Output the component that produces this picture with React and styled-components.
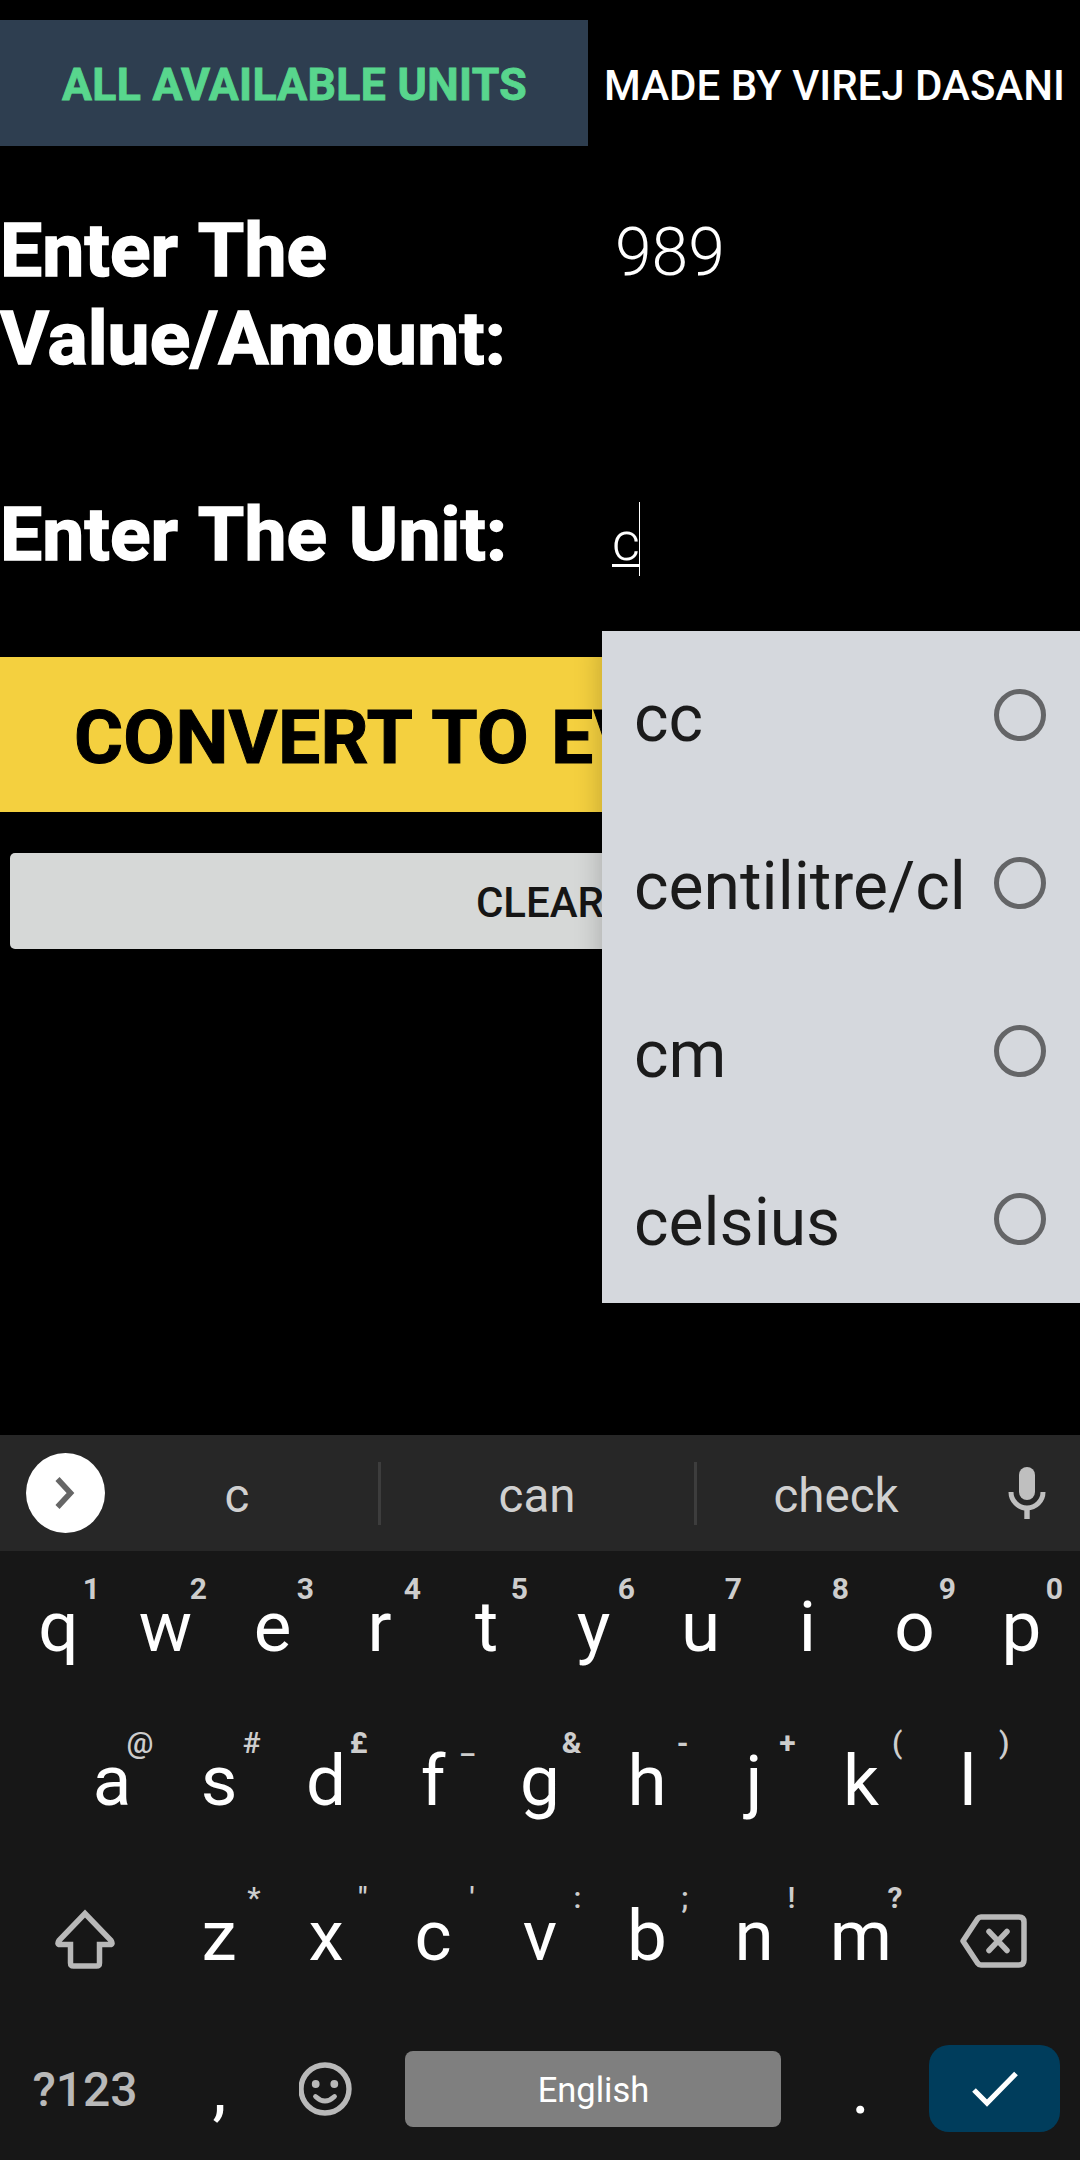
import React from "react";
import styled, { createGlobalStyle } from "styled-components";

const Global = createGlobalStyle`
  * { box-sizing: border-box; }
  html, body { margin: 0; padding: 0; background: #000; }
  body { font-family: Roboto, "Liberation Sans", sans-serif; overflow: hidden; }
  button { font: inherit; border: 0; padding: 0; margin: 0; background: none; color: inherit; }
`;

const Screen = styled.div`
  position: relative;
  width: 1080px;
  height: 2160px;
  overflow: hidden;
  display: flex;
  flex-direction: column;
  background: #000;
  color: #fff;
`;

const Converter = styled.main`
  height: 1435px;
  padding-top: 20px;
  display: flex;
  flex-direction: column;
`;

const Header = styled.header`
  display: grid;
  grid-template-columns: 588px 1fr;
  height: 126px;
  flex: none;
`;

const UnitsButton = styled.button`
  display: flex;
  align-items: center;
  justify-content: center;
  padding: 3px 0 0 1px;
  background: #2e3e50;
  color: #58d68d;
  font-size: 44.5px;
  font-weight: 700;
  letter-spacing: 0.35px;
  -webkit-text-stroke: 0.9px #58d68d;
  white-space: nowrap;
`;

const Credit = styled.div`
  display: flex;
  align-items: center;
  justify-content: center;
  padding: 5px 0 0 1px;
  font-size: 42px;
  font-weight: 500;
  white-space: nowrap;
`;

const Field = styled.div`
  display: grid;
  grid-template-columns: 612px 1fr;
  align-items: start;
  margin-top: ${(p) => p.$gap}px;
  height: ${(p) => p.$height}px;
  flex: none;
`;

const Label = styled.label`
  font-size: 75px;
  line-height: 88px;
  font-weight: 700;
  letter-spacing: 0.1px;
  word-spacing: 3px;
  -webkit-text-stroke: 1.5px #fff;
`;

const Amount = styled.div`
  padding: 3px 0 0 3px;
  font-size: 66px;
  line-height: 88px;
  font-weight: 300;
`;

const UnitEntry = styled.div`
  display: flex;
  margin-top: 12px;
  height: 74px;
`;

const Typed = styled.span`
  align-self: flex-start;
  height: 65px;
  width: 27px;
  padding-top: 8px;
  border-bottom: 3px solid #fff;
  font-size: 54px;
  line-height: 64px;
  font-weight: 300;
`;

const Caret = styled.span`
  width: 1px;
  height: 74px;
  background: #fff;
`;

const ConvertButton = styled.button`
  margin-top: 79px;
  height: 155px;
  flex: none;
  background: #f4d03f;
  color: #000;
  text-align: left;
  padding-left: 74px;
  padding-top: 5px;
  font-size: 75px;
  font-weight: 700;
  letter-spacing: 0.3px;
  word-spacing: 3px;
  -webkit-text-stroke: 1px #000;
  white-space: nowrap;
`;

const ClearButton = styled.button`
  margin: 41px 10px 0;
  height: 96px;
  flex: none;
  border-radius: 5px;
  background: #d6d8d7;
  color: #151515;
  font-size: 42px;
  font-weight: 500;
  padding-top: 3px;
`;

const Suggestions = styled.ul`
  position: absolute;
  left: 602px;
  top: 631px;
  width: 478px;
  margin: 0;
  padding: 0;
  list-style: none;
  background: #d5d8dd;
  box-shadow: 0 8px 26px rgba(0, 0, 0, 0.22);
`;

const Option = styled.li`
  display: flex;
  align-items: center;
  justify-content: space-between;
  height: 168px;
  padding: 0 34px 0 32px;
  color: #1b1b1b;
  font-size: 66px;
`;

const OptionText = styled.span`
  padding-top: 7px;
  white-space: nowrap;
`;

const Radio = styled.span`
  width: 52px;
  height: 52px;
  border: 5px solid #646567;
  border-radius: 50%;
  flex: none;
`;

const Keyboard = styled.section`
  flex: 1;
  background: #171717;
  display: flex;
  flex-direction: column;
`;

const Strip = styled.div`
  height: 116px;
  flex: none;
  background: #272727;
  display: grid;
  grid-template-columns: 97px 281px 3px 313px 3px 279px 102px;
  align-items: center;
`;

const Expand = styled.button`
  width: 79px;
  height: 80px;
  margin-left: 26px;
  padding-right: 1px;
  border-radius: 50%;
  background: #fff;
  display: flex;
  align-items: center;
  justify-content: center;
`;

const Word = styled.span`
  text-align: center;
  font-size: 47.5px;
  padding: 5px 1px 0 0;
  color: #d0d0d0;
`;

const Divider = styled.span`
  height: 63px;
  background: #3d3d3d;
`;

const MicSlot = styled.span`
  display: flex;
  justify-content: center;
`;

const KeyRow = styled.div`
  display: grid;
  grid-template-columns: ${(p) => p.$cols};
  height: 154.5px;
  flex: none;
  padding: 0 5px;
`;

const Key = styled.button`
  display: grid;
  place-items: center;
  font-size: 71px;
  line-height: 72px;
  color: #fff;
`;

const Letter = styled.span`
  grid-area: 1 / 1;
  padding-bottom: 3px;
`;

const Hint = styled.span`
  grid-area: 1 / 1;
  place-self: start end;
  margin: ${(p) => p.$top}px 12px 0 0;
  font-size: 30px;
  line-height: 30px;
  font-weight: ${(p) => (p.$bold ? 700 : 500)};
  color: #cdcdcd;
`;

const IconSlot = styled.span`
  display: flex;
  padding-top: ${(p) => p.$drop}px;
  padding-right: ${(p) => p.$nudge || 0}px;
`;

const BottomRow = styled.div`
  flex: 1;
  padding-top: 3px;
  display: grid;
  grid-template-columns: 165px 107px 107px 428px 107px 166px;
  align-items: center;
  justify-items: center;
`;

const Mode = styled.span`
  font-size: 48px;
  font-weight: 500;
  color: #b9b9b9;
  padding: 2px 0 0 5px;
`;

const Punct = styled.span`
  font-size: 71px;
  line-height: 72px;
  padding-top: 1px;
  padding-left: ${(p) => p.$shift || 0}px;
`;

const Space = styled.button`
  width: 376px;
  height: 76px;
  border-radius: 8px;
  background: #7f7f7f;
  font-size: 34.5px;
  padding: 3px 0 0 1px;
`;

const Enter = styled.button`
  width: 131px;
  height: 87px;
  margin-left: -5px;
  border-radius: 20px;
  background: #003d5c;
  display: flex;
  align-items: center;
  justify-content: center;
`;

const ROW1 = [["q", "1"], ["w", "2"], ["e", "3"], ["r", "4"], ["t", "5"], ["y", "6"], ["u", "7"], ["i", "8"], ["o", "9"], ["p", "0"]];
const ROW2 = [["a", "@"], ["s", "#"], ["d", "£"], ["f", "_"], ["g", "&"], ["h", "-"], ["j", "+"], ["k", "("], ["l", ")"]];
const ROW3 = [["z", "*"], ["x", "\""], ["c", "'"], ["v", ":"], ["b", ";"], ["n", "!"], ["m", "?"]];
const OPTIONS = ["cc", "centilitre/cl", "cm", "celsius"];

const keys = (row, top) =>
  row.map(([ch, hint]) => (
    <Key key={ch}>
      <Letter>{ch}</Letter>
      <Hint $top={top} $bold={/[\d£&+?-]/.test(hint)}>{hint}</Hint>
    </Key>
  ));

const Chevron = () => (
  <svg width="20" height="34" viewBox="0 0 20 34" fill="none" stroke="#666" strokeWidth="5.6">
    <path d="M2.500 3 L15.500 17 L2.500 31" />
  </svg>
);

const Mic = () => (
  <svg width="38" height="52" viewBox="0 0 38 52">
    <rect x="11" y="0" width="16" height="33" rx="8" fill="#bfbfbf" />
    <path d="M3 25 A16 16 0 0 0 35 25" fill="none" stroke="#bfbfbf" strokeWidth="5" />
    <rect x="16.3" y="41" width="5.4" height="11" fill="#bfbfbf" />
  </svg>
);

const Shift = () => (
  <svg width="60" height="60" viewBox="0 0 60 60" fill="none" stroke="#b9b9b9" strokeWidth="5.500" strokeLinejoin="miter">
    <path d="M30 4.500 L4 31.500 Q1.500 35.500 5 35.500 H15.500 V54 Q15.500 57 18.500 57 H41.500 Q44.500 57 44.500 54 V35.500 H55 Q58.500 35.500 56 31.500 Z" />
  </svg>
);

const Backspace = () => (
  <svg width="68" height="54" viewBox="0 0 68 54" fill="none" stroke="#b9b9b9" strokeWidth="5.500" strokeLinejoin="round" strokeLinecap="round">
    <path d="M21 3 H59 Q64 3 64 8 V46 Q64 51 59 51 H21 Q19 51 17.500 49 L3 27 L17.500 5 Q19 3 21 3 Z" />
    <path d="M29 17.500 L47 36.500 M47 17.500 L29 36.500" />
  </svg>
);

const Smiley = () => (
  <svg width="54" height="54" viewBox="0 0 54 54">
    <circle cx="26" cy="27" r="24" fill="none" stroke="#b9b9b9" strokeWidth="5.400" />
    <circle cx="16.700" cy="22" r="3.900" fill="#b9b9b9" />
    <circle cx="35.300" cy="22" r="3.900" fill="#b9b9b9" />
    <path d="M16.500 34.500 Q26 43.500 35.500 34.500" fill="none" stroke="#b9b9b9" strokeWidth="4.800" strokeLinecap="round" />
  </svg>
);

const Check = () => (
  <svg width="46" height="36" viewBox="0 0 46 36" fill="none" stroke="#fff" strokeWidth="5.200">
    <path d="M2 19 L15 32 L44 2.500" />
  </svg>
);

export default function App() {
  return (
    <Screen>
      <Global />
      <Converter>
        <Header>
          <UnitsButton>ALL AVAILABLE UNITS</UnitsButton>
          <Credit>MADE BY VIREJ DASANI</Credit>
        </Header>
        <Field $gap={60} $height={176}>
          <Label>
            Enter The
            <br />
            Value/Amount:
          </Label>
          <Amount>989</Amount>
        </Field>
        <Field $gap={108} $height={88}>
          <Label>Enter The Unit:</Label>
          <UnitEntry>
            <Typed>c</Typed>
            <Caret />
          </UnitEntry>
        </Field>
        <ConvertButton>CONVERT TO EVERYTHING</ConvertButton>
        <ClearButton>CLEAR</ClearButton>
      </Converter>

      <Suggestions>
        {OPTIONS.map((name) => (
          <Option key={name}>
            <OptionText>{name}</OptionText>
            <Radio />
          </Option>
        ))}
      </Suggestions>

      <Keyboard>
        <Strip>
          <Expand><Chevron /></Expand>
          <Word>c</Word>
          <Divider />
          <Word>can</Word>
          <Divider />
          <Word>check</Word>
          <MicSlot><Mic /></MicSlot>
        </Strip>
        <KeyRow $cols="repeat(10, 107px)">{keys(ROW1, 23)}</KeyRow>
        <KeyRow $cols="53.5px repeat(9, 107px)">
          <span />
          {keys(ROW2, 22)}
        </KeyRow>
        <KeyRow $cols="160.5px repeat(7, 107px) 160.5px">
          <Key>
            <IconSlot $drop={4}><Shift /></IconSlot>
          </Key>
          {keys(ROW3, 23)}
          <Key>
            <IconSlot $drop={8} $nudge={2}><Backspace /></IconSlot>
          </Key>
        </KeyRow>
        <BottomRow>
          <Mode>?123</Mode>
          <Punct $shift={2}>,</Punct>
          <Smiley />
          <Space>English</Space>
          <Punct>.</Punct>
          <Enter><Check /></Enter>
        </BottomRow>
      </Keyboard>
    </Screen>
  );
}
